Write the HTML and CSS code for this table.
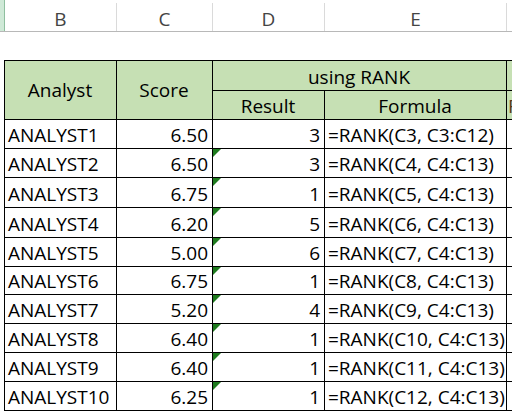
FILE: index.html
```html
<!DOCTYPE html>
<html>
<head>
<meta charset="utf-8">
<link rel="stylesheet" href="styles.css">
</head>
<body>
<div class="colheads">
  <div class="corner"></div>
  <div class="ch">B</div>
  <div class="ch">C</div>
  <div class="ch">D</div>
  <div class="ch">E</div>
  <div class="ch ch-f"></div>
</div>
<div class="blank-row"></div>
<div class="sheet">
  <div class="cell hdr merged-v">Analyst</div>
  <div class="cell hdr merged-v">Score</div>
  <div class="cell hdr span2">using RANK</div>
  <div class="cell hdr f-col"></div>
  <div class="cell hdr">Result</div>
  <div class="cell hdr">Formula</div>
  <div class="cell hdr f-col f-text">R</div>

  <div class="cell txt">ANALYST1</div><div class="cell num">6.50</div><div class="cell num">3</div><div class="cell txt">=RANK(C3, C3:C12)</div><div class="cell f-col"></div>
  <div class="cell txt">ANALYST2</div><div class="cell num">6.50</div><div class="cell num flag">3</div><div class="cell txt">=RANK(C4, C4:C13)</div><div class="cell f-col"></div>
  <div class="cell txt">ANALYST3</div><div class="cell num">6.75</div><div class="cell num flag">1</div><div class="cell txt">=RANK(C5, C4:C13)</div><div class="cell f-col"></div>
  <div class="cell txt">ANALYST4</div><div class="cell num">6.20</div><div class="cell num flag">5</div><div class="cell txt">=RANK(C6, C4:C13)</div><div class="cell f-col"></div>
  <div class="cell txt">ANALYST5</div><div class="cell num">5.00</div><div class="cell num flag">6</div><div class="cell txt">=RANK(C7, C4:C13)</div><div class="cell f-col"></div>
  <div class="cell txt">ANALYST6</div><div class="cell num">6.75</div><div class="cell num flag">1</div><div class="cell txt">=RANK(C8, C4:C13)</div><div class="cell f-col"></div>
  <div class="cell txt">ANALYST7</div><div class="cell num">5.20</div><div class="cell num flag">4</div><div class="cell txt">=RANK(C9, C4:C13)</div><div class="cell f-col"></div>
  <div class="cell txt">ANALYST8</div><div class="cell num">6.40</div><div class="cell num flag">1</div><div class="cell txt">=RANK(C10, C4:C13)</div><div class="cell f-col"></div>
  <div class="cell txt">ANALYST9</div><div class="cell num">6.40</div><div class="cell num flag">1</div><div class="cell txt">=RANK(C11, C4:C13)</div><div class="cell f-col"></div>
  <div class="cell txt">ANALYST10</div><div class="cell num">6.25</div><div class="cell num flag">1</div><div class="cell txt">=RANK(C12, C4:C13)</div><div class="cell f-col"></div>
</div>
</body>
</html>
```

FILE: styles.css
```css
html, body {
  margin: 0;
  padding: 0;
  background: #ffffff;
  width: 512px;
  height: 414px;
  overflow: hidden;
}
body {
  font-family: "Open Sans", Lato, sans-serif;
  font-size: 19px;
  line-height: 20px;
  color: #000;
}
.colheads {
  display: grid;
  grid-template-columns: 5px 112px 96px 112px 182px 1fr;
  height: 31px;
  border-bottom: 1px solid #b8b8b8;
}
.corner {
  background: #cfe9d7;
  border-right: 1px solid #8fbf9f;
}
.ch {
  display: flex;
  align-items: center;
  justify-content: center;
  color: #444;
  padding-top: 4px;
  border-right: 1px solid #dadada;
  margin-top: 3px;
}
.ch-f { border-right: none; }
.blank-row {
  height: 28px;
}
.sheet {
  display: grid;
  margin-left: 4px;
  grid-template-columns: 112px 96px 112px 182px 1fr;
  grid-template-rows: 30px 29px 29px 29px 30px 30px 29px 28px 29px 29px 29px 29px;
  border-left: 1px solid #000;
  border-top: 1px solid #000;
}
.cell {
  border-right: 1px solid #000;
  border-bottom: 1px solid #000;
  display: flex;
  align-items: flex-end;
  padding: 0 4px 3px 3px;
  white-space: nowrap;
  overflow: hidden;
  position: relative;
  min-width: 0;
}
.hdr {
  background: #c6e0b4;
  justify-content: center;
}
.merged-v {
  grid-row: span 2;
  align-items: center;
  padding-bottom: 0;
}
.span2 {
  grid-column: span 2;
}
.f-col {
  border-right: none;
}
.f-text {
  justify-content: flex-start;
  padding-left: 1px;
  color: #5a3a1a;
}
.num {
  justify-content: flex-end;
}
.txt {
  justify-content: flex-start;
}
.flag::before {
  content: "";
  position: absolute;
  top: 0;
  left: 0;
  width: 0;
  height: 0;
  border-top: 8px solid #1e7b1e;
  border-right: 8px solid transparent;
}
```
